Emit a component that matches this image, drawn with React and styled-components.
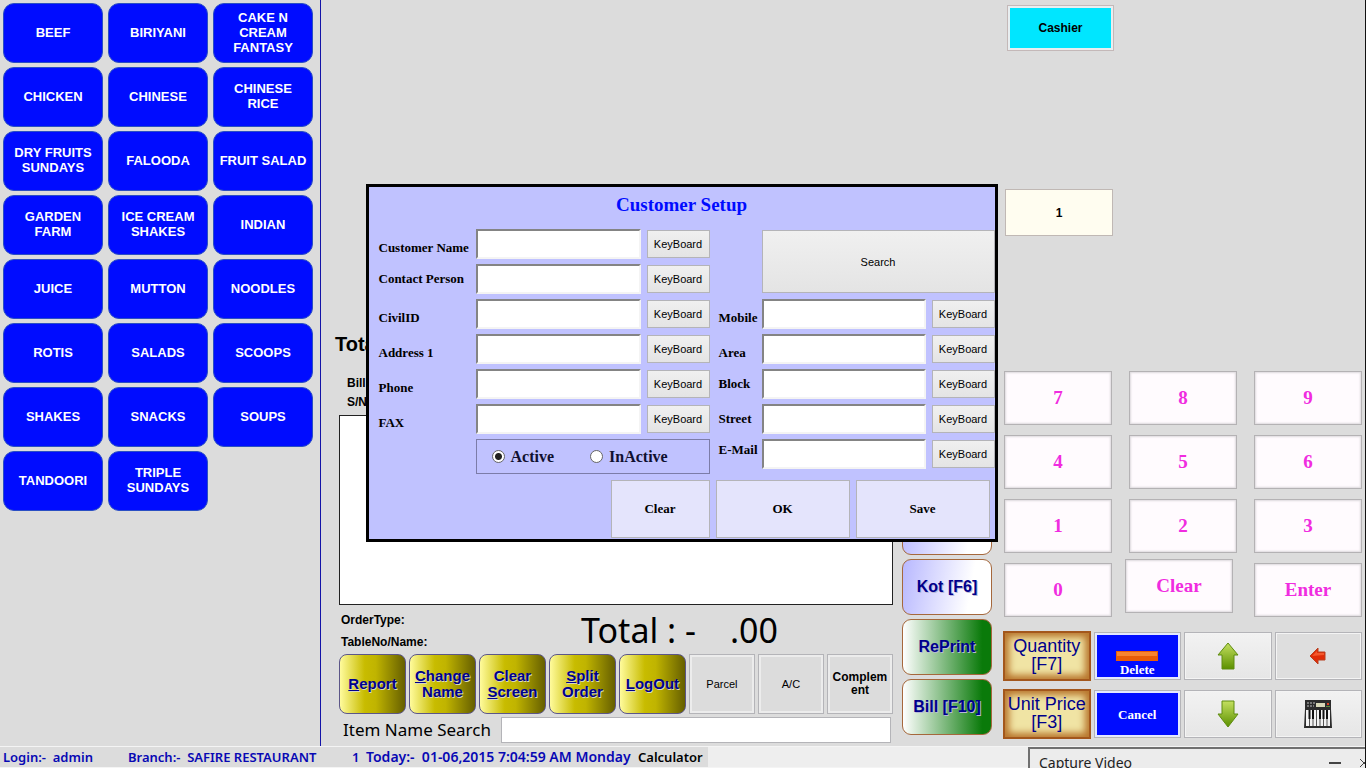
import React, { useState } from 'react';
import styled, { createGlobalStyle } from 'styled-components';

const Color = {
  Page: '#dcdcdc',
  Blue: '#000cff',
  Navy: '#00008b',
  Lilac: '#c0c2ff',
  Pink: '#f02ce0',
  Border: '#b4b4b8',
};

const Font = {
  Sans: '"Liberation Sans", Arial, sans-serif',
  Serif: '"Liberation Serif", "Times New Roman", serif',
  Ui: '"Noto Sans", Tahoma, sans-serif',
};

const GlobalStyle = createGlobalStyle`
  * {
    box-sizing: border-box;
  }

  body {
    margin: 0;
    background: ${Color.Page};
    color: #000;
    font-family: ${Font.Sans};
    font-size: 11px;
  }

  button,
  input {
    font: inherit;
    color: inherit;
    margin: 0;
    padding: 0;
  }
`;

const Page = styled.div`
  position: relative;
  display: flex;
  flex-direction: column;
  min-height: 100vh;
  border-right: 1px solid #111;
  overflow: hidden;
`;

const Main = styled.main`
  flex: 1;
  display: flex;
`;

/* categories */

const Categories = styled.nav`
  width: 321px;
  display: grid;
  grid-template-columns: repeat(3, 1fr);
  grid-auto-rows: 60px;
  gap: 4px 5px;
  padding: 3px 7px 0 3px;
  border-right: 1px solid #1414a8;
`;

const Category = styled.button`
  padding: 0 5px 2px;
  border: 1px solid #2a4fc4;
  border-radius: 11px;
  background: ${Color.Blue};
  color: #fff;
  font-size: 13px;
  font-weight: 700;
  line-height: 15px;
`;

/* order panel */

const OrderPanel = styled.section`
  flex: 1;
  display: flex;
  flex-direction: column;
  justify-content: flex-end;
  padding: 0 9px 3px 18px;
`;

const OrderTitle = styled.h2`
  margin: 0 0 16px;
  font-size: 20px;
  line-height: 28px;
  text-indent: -4px;
`;

const OrderHead = styled.div`
  padding: 0 0 3px 8px;
  font-size: 12px;
  font-weight: 700;
  line-height: 19px;
`;

const OrderList = styled.div`
  height: 190px;
  border: 1px solid #222;
  background: #fff;
`;

const OrderMeta = styled.div`
  display: flex;
  align-items: center;
  height: 49px;
  padding: 2px 115px 0 2px;
  font-size: 12px;
  font-weight: 700;
  line-height: 22px;
`;

const Sum = styled.div`
  flex: 1;
  display: flex;
  justify-content: flex-end;
  gap: 34px;
  padding-bottom: 2px;
  font-family: ${Font.Ui};
  font-size: 34px;
  font-weight: 400;
  line-height: 44px;
`;

const ButtonRow = styled.div`
  display: flex;
  gap: 3px;
  height: 60px;
`;

const GoldButton = styled.button`
  flex: 67;
  border: 1px solid #5c5688;
  border-radius: 8px;
  background: linear-gradient(to right, #fffb9c 0%, #c8bc00 38%, #c0b400 55%, #665f00 100%);
  color: ${Color.Navy};
  font-size: 15px;
  font-weight: 700;
  line-height: 16px;
  text-shadow: 1px 1px 0 #d8d8c0;
`;

const FlatButton = styled.button`
  flex: 66;
  border: 1px solid ${Color.Border};
  background: ${Color.Page};
  box-shadow: inset 0 0 0 2px #ececec;
  font-size: ${({ $bold }) => ($bold ? '12px' : '11px')};
  font-weight: ${({ $bold }) => ($bold ? 700 : 400)};
  line-height: 13px;
`;

const SearchRow = styled.label`
  display: flex;
  align-items: center;
  gap: 10px;
  padding: 3px 2px 0 4px;
  font-family: ${Font.Ui};
  font-size: 17px;
  line-height: 24px;
`;

const SearchInput = styled.input`
  flex: 1;
  min-width: 0;
  height: 26px;
  border: 1px solid ${Color.Border};
  background: #fff;
`;

/* print and bill buttons */

const Actions = styled.section`
  width: 90px;
  display: flex;
  flex-direction: column;
  justify-content: flex-end;
  gap: 4px;
  padding-bottom: 11px;
`;

const ActionButton = styled.button`
  height: 56px;
  border: 1px solid #a5683c;
  border-radius: 9px;
  background: ${({ $green }) =>
    $green
      ? 'linear-gradient(to right, #fff 0%, #0a7a0a 90%)'
      : 'linear-gradient(100deg, #b8b8ff 0%, #fff 75%)'};
  color: ${Color.Navy};
  font-size: 16px;
  font-weight: 700;
  text-shadow: 1px 1px 0 #b8b8d8;
`;

/* key pad */

const PadPanel = styled.section`
  width: 373px;
  display: flex;
  flex-direction: column;
  padding: 5px 3px 7px 8px;
`;

const Cashier = styled.button`
  width: 107px;
  height: 46px;
  margin: 0 0 138px 7px;
  border: 1px solid #c4b8b8;
  background: #00e6ff;
  box-shadow: inset 0 0 0 2px #e8eef0;
  font-size: 12px;
  font-weight: 700;
`;

const Amount = styled.input`
  width: 108px;
  height: 47px;
  margin-left: 5px;
  border: 1px solid #c0b8b4;
  background: #fffdf0;
  text-align: center;
  font-size: 12px;
  font-weight: 700;
`;

const KeyPad = styled.div`
  display: grid;
  grid-template-columns: repeat(3, 1fr);
  grid-auto-rows: 58px;
  gap: 6px 13px;
  margin-top: auto;
`;

const Key = styled.button`
  width: calc(100% - 4px);
  height: 54px;
  place-self: ${({ $start }) => ($start ? 'start' : 'end')};
  border: 1px solid #b4b2b4;
  background: #fffbfe;
  box-shadow: inset 0 0 2px 1px #dedade;
  color: ${Color.Pink};
  font-family: ${Font.Serif};
  font-size: 19px;
  font-weight: 700;
`;

const FunctionKeys = styled.div`
  display: grid;
  grid-template-columns: repeat(4, 1fr);
  grid-auto-rows: 50px;
  gap: 8px 3px;
  padding: 14px 0 0 3px;
`;

const WoodButton = styled.button`
  padding-bottom: 2px;
  border: 2px solid #a3571c;
  background: #f0e4a4;
  box-shadow: inset 0 0 7px 4px #b8752c;
  color: ${Color.Navy};
  font-size: 18px;
  line-height: 18px;
`;

const BlueButton = styled.button`
  display: flex;
  flex-direction: column;
  align-items: center;
  justify-content: center;
  gap: 2px;
  margin: 1px 0;
  padding-top: ${({ $icon }) => ($icon ? '14px' : '0')};
  border: 1px solid ${Color.Border};
  background: ${Color.Blue};
  box-shadow: inset 0 0 0 2px #e4e8ff;
  color: #fff;
  font-family: ${Font.Serif};
  font-size: 13px;
  font-weight: 700;
  line-height: 13px;
`;

const IconButton = styled.button`
  display: flex;
  align-items: center;
  justify-content: center;
  margin: 1px 0;
  border: 1px solid ${Color.Border};
  background: ${({ $dim }) => ($dim ? '#dedede' : 'linear-gradient(#f2f2f2, #e6e6e6)')};
  box-shadow: inset 0 0 0 1px #f4f4f4;
`;

/* status bar */

const StatusBar = styled.footer`
  display: flex;
  height: 22px;
  border-top: 1px solid #f4f4f4;
  border-bottom: 1px solid #f4f4f4;
  background: #eee;
  font-family: ${Font.Ui};
  font-size: 13px;
  font-weight: 600;
  line-height: 20px;
  white-space: pre;
`;

const StatusText = styled.span`
  width: ${({ $width }) => $width}px;
  padding-left: 3px;
  background: ${Color.Page};
  color: ${({ $dark }) => ($dark ? '#000' : '#0808b4')};
`;

const DateText = styled(StatusText)`
  font-size: 14px;
`;

const CaptureWindow = styled.aside`
  position: absolute;
  right: 0;
  bottom: 0;
  width: 337px;
  height: 21px;
  display: flex;
  align-items: flex-start;
  padding-left: 9px;
  border-top: 2px solid #707070;
  border-left: 2px solid #707070;
  background: #ececec;
  color: #222;
  font-family: ${Font.Ui};
  font-size: 14px;
  line-height: 28px;
  overflow: hidden;
`;

const WindowButton = styled.button`
  flex-shrink: 0;
  display: flex;
  align-items: center;
  justify-content: center;
  width: 48px;
  height: 28px;
  border: 0;
  background: none;

  &:first-of-type {
    margin-left: auto;
  }

  &:last-of-type {
    width: 6px;
    justify-content: flex-start;
  }

  svg {
    flex-shrink: 0;
  }
`;

/* customer dialog */

const Dialog = styled.form`
  position: absolute;
  top: 184px;
  left: 50%;
  width: 632px;
  margin-left: -317px;
  padding: 0 0 1px 10px;
  border: 3px solid #000;
  background: ${Color.Lilac};
`;

const DialogTitle = styled.h1`
  margin: 0 0 6px;
  padding-right: 10px;
  color: ${Color.Blue};
  font-family: ${Font.Serif};
  font-size: 19px;
  line-height: 36px;
  text-align: center;
`;

const Columns = styled.div`
  display: flex;
  gap: 9px;
`;

const Column = styled.div`
  flex: ${({ $grow }) => $grow};
  display: flex;
  flex-direction: column;
  gap: 5px;
`;

const FieldRow = styled.div`
  display: grid;
  grid-template-columns: ${({ $label }) => $label}px 1fr 63px;
  gap: 6px;
  height: 30px;
`;

const FieldLabel = styled.label`
  align-self: ${({ $align }) => $align};
  font-family: ${Font.Serif};
  font-size: 13px;
  font-weight: 700;
  line-height: 22px;
  white-space: nowrap;
`;

const TextBox = styled.input`
  width: 100%;
  min-width: 0;
  height: 30px;
  padding: 0 4px;
  border: 2px solid;
  border-color: #848484 #f4f4f4 #f4f4f4 #848484;
  background: #fff;
`;

const GrayButton = styled.button`
  margin: 1px 0;
  border: 1px solid ${Color.Border};
  background: linear-gradient(#f0f0f0, #e4e4e4);
`;

const SearchButton = styled(GrayButton)`
  height: 63px;
  margin-left: 43px;
`;

const StatusGroup = styled.div`
  display: flex;
  align-items: center;
  gap: 36px;
  height: 35px;
  margin-left: 97px;
  padding-left: 15px;
  border: 1px solid #7c7ca8;
`;

const RadioLabel = styled.label`
  display: flex;
  align-items: center;
  gap: 6px;
  font-family: ${Font.Serif};
  font-size: 16px;
  font-weight: 700;
  color: #101030;
`;

const Radio = styled.input`
  appearance: none;
  width: 13px;
  height: 13px;
  border: 1px solid #666;
  border-radius: 50%;
  background: #fff;

  &:checked {
    background: radial-gradient(circle, #222 0 3px, #fff 4px);
  }
`;

const DialogFooter = styled.div`
  display: flex;
  justify-content: flex-end;
  gap: 6px;
  padding: 6px 5px 0 0;
`;

const FooterButton = styled.button`
  width: ${({ $small }) => ($small ? 99 : 134)}px;
  height: 58px;
  border: 1px solid ${Color.Border};
  background: #e4e4fc;
  font-family: ${Font.Serif};
  font-size: 13px;
  font-weight: 700;
`;

const categories = [
  'BEEF', 'BIRIYANI', 'CAKE N CREAM FANTASY',
  'CHICKEN', 'CHINESE', 'CHINESE RICE',
  'DRY FRUITS SUNDAYS', 'FALOODA', 'FRUIT SALAD',
  'GARDEN FARM', 'ICE CREAM SHAKES', 'INDIAN',
  'JUICE', 'MUTTON', 'NOODLES',
  'ROTIS', 'SALADS', 'SCOOPS',
  'SHAKES', 'SNACKS', 'SOUPS',
  'TANDOORI', 'TRIPLE SUNDAYS',
];

const keys = ['7', '8', '9', '4', '5', '6', '1', '2', '3', '0', 'Clear', 'Enter'];

const leftFields = [
  { name: 'Customer Name', align: 'end' },
  { name: 'Contact Person', align: 'center' },
  { name: 'CivilID', align: 'end' },
  { name: 'Address 1', align: 'end' },
  { name: 'Phone', align: 'end' },
  { name: 'FAX', align: 'end' },
];

const rightFields = [
  { name: 'Mobile', align: 'end' },
  { name: 'Area', align: 'end' },
  { name: 'Block', align: 'center' },
  { name: 'Street', align: 'center' },
  { name: 'E-Mail', align: 'start' },
];

const ArrowIcon = ({ down }) => (
  <svg width="22" height="28" viewBox="0 0 22 28" aria-hidden="true">
    <defs>
      <linearGradient id={down ? 'leafDown' : 'leafUp'} x1="0" y1="0" x2="0" y2="1">
        <stop offset="0" stopColor="#c4e060" />
        <stop offset="1" stopColor="#5c9000" />
      </linearGradient>
    </defs>
    <path
      d={down ? 'M5 1h12v13h4L11 27 1 14h4z' : 'M11 1l10 12h-4v14H5V13H1z'}
      fill={`url(#${down ? 'leafDown' : 'leafUp'})`}
      stroke="#5f8c10"
      strokeLinejoin="round"
    />
  </svg>
);

const BackIcon = () => (
  <svg width="18" height="18" viewBox="0 0 18 18" aria-hidden="true">
    <path d="M1 9l8-8v4h7v8H9v4z" fill="#e02c08" stroke="#b84020" strokeLinejoin="round" />
    <path d="M3 9l5-5v2h7v2z" fill="#f4582c" />
  </svg>
);

const MinusIcon = () => (
  <svg width="42" height="10" viewBox="0 0 42 10" aria-hidden="true">
    <rect width="42" height="10" fill="#e85c08" />
    <rect x="1" y="1" width="40" height="4" fill="#f88430" />
  </svg>
);

const PianoIcon = () => (
  <svg width="28" height="30" viewBox="0 0 28 30" aria-hidden="true">
    <path d="M1 1h26v9l1 19H0l1-19z" fill="#2c2c2c" />
    <path d="M3 4h8M3 7h7" stroke="#777" strokeWidth="2" strokeDasharray="2 1" />
    <rect x="12" y="4" width="9" height="4" fill="#d8d8b8" />
    <rect x="23" y="4" width="2" height="2" fill="#e04020" />
    <rect x="22" y="7" width="4" height="1" fill="#5a8a3c" />
    <rect x="2" y="11" width="24" height="16" fill="#f4f4f4" />
    <path d="M5.5 11v16M9 11v16M12.5 11v16M16 11v16M19.5 11v16M23 11v16" stroke="#555" />
    <path d="M5.5 11v9M9 11v9M16 11v9M19.5 11v9M23 11v9" stroke="#111" strokeWidth="2" />
  </svg>
);

const Field = ({ name, align, labelWidth }) => {
  const id = name.toLowerCase().replace(/\W/g, '-');

  return (
    <FieldRow $label={labelWidth}>
      <FieldLabel htmlFor={id} $align={align}>
        {name}
      </FieldLabel>
      <TextBox id={id} type="text" />
      <GrayButton type="button">KeyBoard</GrayButton>
    </FieldRow>
  );
};

const CustomerSetup = () => {
  const [status, setStatus] = useState('Active');

  return (
    <Dialog role="dialog" aria-labelledby="dialog-title" onSubmit={(e) => e.preventDefault()}>
      <DialogTitle id="dialog-title">Customer Setup</DialogTitle>
      <Columns>
        <Column $grow={331}>
          {leftFields.map((field) => (
            <Field key={field.name} labelWidth={91} {...field} />
          ))}
          <StatusGroup role="radiogroup" aria-label="Status">
            {['Active', 'InActive'].map((value) => (
              <RadioLabel key={value}>
                <Radio
                  type="radio"
                  name="status"
                  checked={status === value}
                  onChange={() => setStatus(value)}
                />
                {value}
              </RadioLabel>
            ))}
          </StatusGroup>
        </Column>
        <Column $grow={276}>
          <SearchButton type="button">Search</SearchButton>
          {rightFields.map((field) => (
            <Field key={field.name} labelWidth={37} {...field} />
          ))}
        </Column>
      </Columns>
      <DialogFooter>
        <FooterButton type="reset" $small>
          Clear
        </FooterButton>
        <FooterButton type="button">OK</FooterButton>
        <FooterButton type="submit">Save</FooterButton>
      </DialogFooter>
    </Dialog>
  );
};

const App = () => (
  <>
    <GlobalStyle />
    <Page>
      <Main>
        <Categories>
          {categories.map((name) => (
            <Category key={name}>{name}</Category>
          ))}
        </Categories>

        <OrderPanel>
          <OrderTitle>Total</OrderTitle>
          <OrderHead>
            <div>Bill</div>
            <div>S/N</div>
          </OrderHead>
          <OrderList />
          <OrderMeta>
            <div>
              <div>OrderType:</div>
              <div>TableNo/Name:</div>
            </div>
            <Sum>
              <span>Total : -</span>
              <span>.00</span>
            </Sum>
          </OrderMeta>
          <ButtonRow>
            <GoldButton><u>R</u>eport</GoldButton>
            <GoldButton><u>C</u>hange Name</GoldButton>
            <GoldButton>Clear <u>S</u>creen</GoldButton>
            <GoldButton><u>S</u>plit Order</GoldButton>
            <GoldButton><u>L</u>ogOut</GoldButton>
            <FlatButton>Parcel</FlatButton>
            <FlatButton>A/C</FlatButton>
            <FlatButton $bold>Complem<br />ent</FlatButton>
          </ButtonRow>
          <SearchRow>
            Item Name Search
            <SearchInput type="text" />
          </SearchRow>
        </OrderPanel>

        <Actions>
          <ActionButton aria-label="Hold" />
          <ActionButton>Kot [F6]</ActionButton>
          <ActionButton $green>RePrint</ActionButton>
          <ActionButton $green>Bill [F10]</ActionButton>
        </Actions>

        <PadPanel>
          <Cashier>Cashier</Cashier>
          <Amount aria-label="Quantity" defaultValue="1" />
          <KeyPad>
            {keys.map((key) => (
              <Key key={key} $start={key === 'Clear'}>{key}</Key>
            ))}
          </KeyPad>
          <FunctionKeys>
            <WoodButton>Quantity [F7]</WoodButton>
            <BlueButton $icon>
              <MinusIcon />
              Delete
            </BlueButton>
            <IconButton aria-label="Up"><ArrowIcon /></IconButton>
            <IconButton aria-label="Back" $dim><BackIcon /></IconButton>
            <WoodButton>Unit Price [F3]</WoodButton>
            <BlueButton>Cancel</BlueButton>
            <IconButton aria-label="Down"><ArrowIcon down /></IconButton>
            <IconButton aria-label="Keyboard"><PianoIcon /></IconButton>
          </FunctionKeys>
        </PadPanel>
      </Main>

      <StatusBar>
        <StatusText $width={125}>Login:-  admin</StatusText>
        <StatusText $width={224}>Branch:-  SAFIRE RESTAURANT</StatusText>
        <StatusText $width={14}>1</StatusText>
        <DateText $width={272}>Today:-  01-06,2015 7:04:59 AM Monday</DateText>
        <StatusText $width={73} $dark>Calculator</StatusText>
      </StatusBar>

      <CustomerSetup />

      <CaptureWindow>
        Capture Video
        <WindowButton aria-label="Minimize">
          <svg width="12" height="2" aria-hidden="true">
            <rect width="12" height="2" fill="#444" />
          </svg>
        </WindowButton>
        <WindowButton aria-label="Close">
          <svg width="10" height="10" viewBox="0 0 10 10" aria-hidden="true">
            <path d="M1 1l8 8M9 1L1 9" stroke="#444" />
          </svg>
        </WindowButton>
      </CaptureWindow>
    </Page>
  </>
);

export default App;
